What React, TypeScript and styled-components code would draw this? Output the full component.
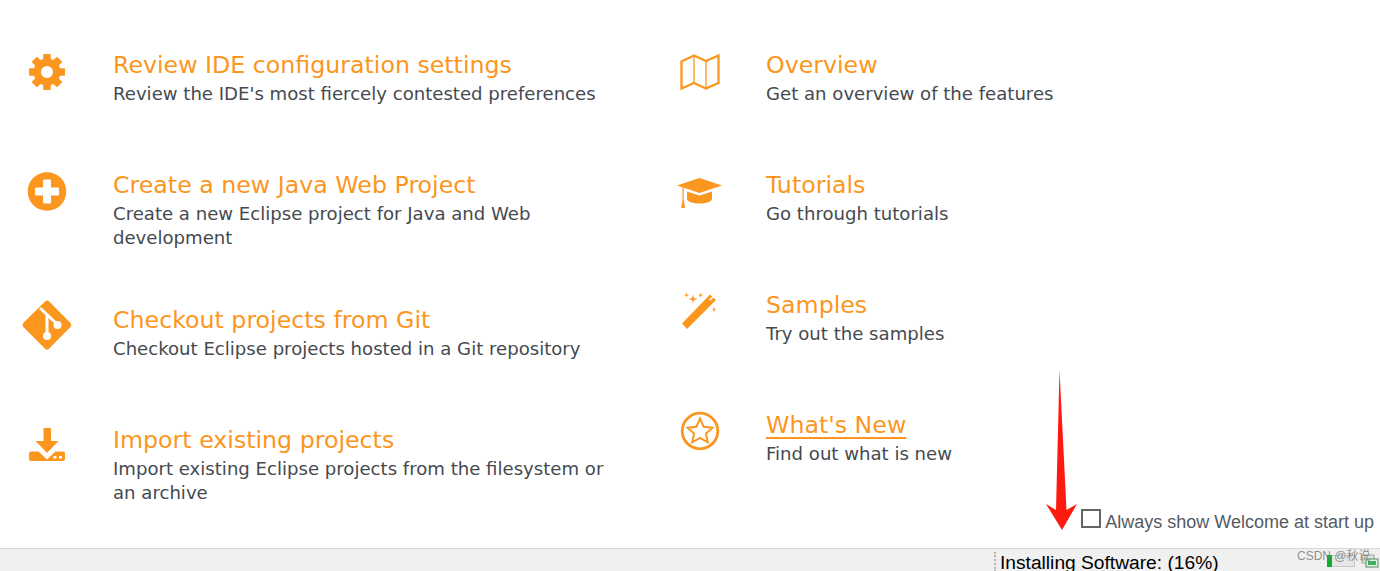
import React from "react";
import styled, { createGlobalStyle } from "styled-components";

const orange = "#fb961f";

const Global = createGlobalStyle`
  html, body { margin: 0; padding: 0; background: #fff; overflow: hidden; }
`;
const Page = styled.div`
  position: relative;
  width: 1380px;
  height: 571px;
  display: flex;
  flex-direction: column;
  overflow: hidden;
`;
const Main = styled.main`
  flex: 1;
  display: flex;
  flex-direction: column;
  justify-content: space-between;
  padding: 50px 6px 15px 20px;
  min-height: 0;
`;
const Columns = styled.div`
  display: grid;
  grid-template-columns: 653px 520px;
`;
const Column = styled.div`
  display: flex;
  flex-direction: column;
`;
const Item = styled.a`
  display: flex;
  min-height: 120px;
  padding-bottom: 56px;
  box-sizing: border-box;
  &:last-child {
    padding-bottom: 0;
    min-height: 0;
  }
`;
const IconBox = styled.svg`
  width: 54px;
  height: 48px;
  margin-right: 39px;
  flex: none;
  overflow: visible;
`;
const Body = styled.div`
  width: 512px;
`;
const Title = styled.div<{ $link?: boolean }>`
  font: 23.7px/31px "DejaVu Sans", Verdana, sans-serif;
  color: ${orange};
  text-decoration: ${(p) => (p.$link ? "underline" : "none")};
  text-decoration-thickness: 2px;
  text-underline-offset: 4px;
`;
const Desc = styled.div`
  font: 18.1px/23.5px "DejaVu Sans", Verdana, sans-serif;
  color: #454a50;
  margin-top: 1px;
`;
const StartRow = styled.label`
  display: flex;
  justify-content: flex-end;
  align-items: flex-end;
  gap: 4px;
  font: 18px/22px "Liberation Sans", Arial, sans-serif;
  color: #555b62;
`;
const Box = styled.span`
  width: 20px;
  height: 19px;
  box-sizing: border-box;
  border: 2px solid #666;
  margin-bottom: 5px;
`;
const Status = styled.footer`
  height: 23px;
  flex: none;
  background: #f0f0f0;
  border-top: 1px solid #d9d9d9;
  box-sizing: border-box;
  display: flex;
  align-items: flex-start;
  padding-left: 994px;
  overflow: hidden;
`;
const Grip = styled.span`
  width: 2px;
  height: 20px;
  margin: 3px 2px 0 0;
  border-left: 2px dotted #b9b4a8;
`;
const StatusText = styled.span`
  font: 19.2px/28px "Liberation Sans", Arial, sans-serif;
  color: #000;
  white-space: nowrap;
`;
const Progress = styled.span`
  position: absolute;
  left: 1327px;
  top: 555px;
  width: 28px;
  height: 12px;
  background: #e6e6e6;
  border: 1px solid #c8c8c8;
  box-sizing: border-box;
`;
const ProgressFill = styled.span`
  display: block;
  height: 100%;
  margin: -1px 0 0 -1px;
  padding-bottom: 2px;
  background: #0fae2f;
`;
const Tray = styled.svg`
  position: absolute;
  left: 1360px;
  top: 553px;
  width: 20px;
  height: 16px;
`;
const Watermark = styled.span`
  position: absolute;
  left: 1297px;
  top: 548px;
  font: 12px/16px "Liberation Sans", "Noto Sans CJK SC", sans-serif;
  color: rgba(110, 110, 110, 0.75);
  white-space: nowrap;
`;
const Arrow = styled.svg`
  position: absolute;
  left: 1040px;
  top: 365px;
  width: 44px;
  height: 170px;
`;

const O = orange;
const icons: Record<string, React.ReactNode> = {
  gear: (
    <>
      <g fill={O}>
        <circle cx="27" cy="22" r="13.5" />
        {[0, 45, 90, 135].map((a) => (
          <rect key={a} x="23.2" y="4" width="7.6" height="36" rx="1" transform={`rotate(${a} 27 22)`} />
        ))}
      </g>
      <circle cx="27" cy="22" r="6" fill="#fff" />
    </>
  ),
  plus: (
    <>
      <circle cx="27" cy="21.5" r="19.3" fill={O} />
      <path d="M23.5 10h7v8h8v7h-8v8h-7v-8h-8v-7h8z" fill="#fff" stroke="#fff" strokeLinejoin="round" />
    </>
  ),
  git: (
    <>
      <path d="M25 -3.500a3 3 0 0 1 4.200 0L50 17.500a3.500 3.500 0 0 1 0 5L29.200 43.500a3 3 0 0 1-4.400 0L3.800 22.500a3.500 3.500 0 0 1 0-5z" fill={O} />
      <path d="M20 3l18 17M27 10v20" stroke="#fff" strokeWidth="3" fill="none" />
      <circle cx="37.500" cy="20" r="4" fill="#fff" />
      <circle cx="27" cy="31" r="4" fill="#fff" />
    </>
  ),
  download: (
    <>
      <path d="M23.500 3h7.500v13h7.500l-11.500 12-11.500-12h8z" fill={O} />
      <path d="M9 28.500a2 2 0 0 1 2-2h7.500l8.500 8 8.500-8H43a2 2 0 0 1 2 2V34a2 2 0 0 1-2 2H11a2 2 0 0 1-2-2z" fill={O} />
      <rect x="33.500" y="31" width="3" height="2.500" fill="#fff" />
      <rect x="39" y="31" width="3" height="2.500" fill="#fff" />
    </>
  ),
  map: (
    <>
      <path d="M8.500 11.500L21 5.500l12 5.500 12.500-5.500v27.500L33 38.500 21 33 8.500 38.500z" fill="none" stroke={O} strokeWidth="2.300" />
      <path d="M21 5.500V33M33 11v27.500" fill="none" stroke={O} strokeWidth="1.300" />
    </>
  ),
  cap: (
    <>
      <path d="M26.500 8L49 15.500 26.500 23 4 15.500z" fill={O} />
      <path d="M14 21.500l12.500 4 12.500-4v7.500c0 2.500-6 4.500-12.500 4.500S14 31.500 14 29z" fill={O} />
      <path d="M9.500 17.500h1.200V30l1.300 8H8.200l1.300-8z" fill={O} />
    </>
  ),
  wand: (
    <>
      <path d="M9 33.500L37 4.500l6 5.500-29 29z" fill={O} />
      <path d="M36 9.500l3.500-3 1 1-3.300 3.300z" fill="#fff" />
      <path d="M20 4.500l1 3.500 3.500 1-3.500 1-1 3.500-1-3.500-3.500-1 3.500-1zM27.500 2.500l.6 2 2 .6-2 .6-.6 2-.6-2-2-.6 2-.6zM13.500 2.500l.6 2 2 .6-2 .6-.6 2-.6-2-2-.6 2-.6zM41 16.500l.6 2.500 1.400.6-1.400.6-.6 2.500-.6-2.500-1.400-.6 1.400-.6z" fill={O} />
    </>
  ),
  star: (
    <>
      <circle cx="27" cy="21" r="17.800" fill="none" stroke={O} strokeWidth="2.800" />
      <path d="M27 8.500l3.700 8.300 8.800.9-6.600 5.900 1.900 8.800L27 28l-7.800 4.400 1.900-8.800-6.600-5.900 8.800-.9z" fill="none" stroke={O} strokeWidth="2" strokeLinejoin="miter" />
    </>
  ),
};

type Entry = { icon: string; title: string; desc: string; link?: boolean };
const left: Entry[] = [
  { icon: "gear", title: "Review IDE configuration settings", desc: "Review the IDE's most fiercely contested preferences" },
  { icon: "plus", title: "Create a new Java Web Project", desc: "Create a new Eclipse project for Java and Web development" },
  { icon: "git", title: "Checkout projects from Git", desc: "Checkout Eclipse projects hosted in a Git repository" },
  { icon: "download", title: "Import existing projects", desc: "Import existing Eclipse projects from the filesystem or an archive" },
];
const right: Entry[] = [
  { icon: "map", title: "Overview", desc: "Get an overview of the features" },
  { icon: "cap", title: "Tutorials", desc: "Go through tutorials" },
  { icon: "wand", title: "Samples", desc: "Try out the samples" },
  { icon: "star", title: "What's New", desc: "Find out what is new", link: true },
];

const Entries = ({ list }: { list: Entry[] }) => (
  <Column>
    {list.map((e) => (
      <Item key={e.title}>
        <IconBox viewBox="0 0 54 48">{icons[e.icon]}</IconBox>
        <Body>
          <Title $link={e.link}>{e.title}</Title>
          <Desc>{e.desc}</Desc>
        </Body>
      </Item>
    ))}
  </Column>
);

export default function App() {
  return (
    <Page>
      <Global />
      <Main>
        <Columns>
          <Entries list={left} />
          <Entries list={right} />
        </Columns>
        <StartRow>
          <Box />
          Always show Welcome at start up
        </StartRow>
      </Main>
      <Status>
        <Grip />
        <StatusText>Installing Software: (16%)</StatusText>
      </Status>
      <Progress>
        <ProgressFill style={{ width: "18%" }} />
      </Progress>
      <Tray viewBox="0 0 20 16">
        <rect x="2" y="2" width="12" height="8" fill="#dfe8df" stroke="#9aa89a" />
        <rect x="6" y="6" width="12" height="8" fill="#e8f3e8" stroke="#4d8f5b" />
        <rect x="8" y="8" width="8" height="4" fill="#3fae5f" />
      </Tray>
      <Watermark>CSDN @秋说</Watermark>
      <Arrow viewBox="0 0 44 170">
        <path d="M19.500 5L26.500 145 37 139 22 165 6 139 16 145z" fill="#ff1a10" />
      </Arrow>
    </Page>
  );
}
